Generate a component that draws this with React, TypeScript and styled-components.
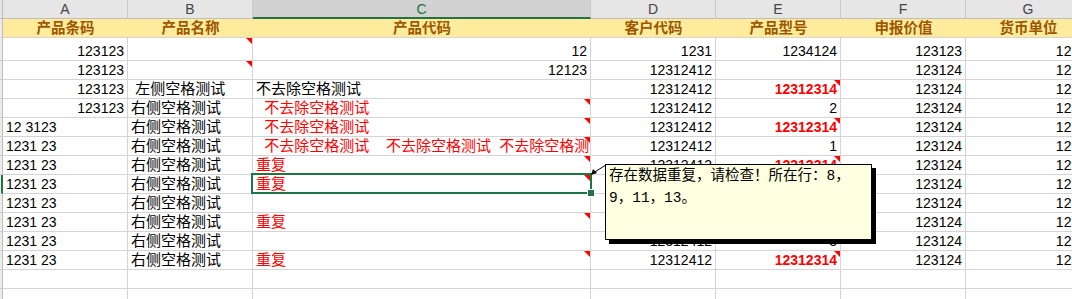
import {FC} from "react";
import styled, {createGlobalStyle} from "styled-components";

const GlobalStyle = createGlobalStyle`
  body {
    margin: 0;
    background: #fff;
    overflow: hidden;
  }
`;

type Align = 'left' | 'right' | 'center';

type CellData = {
  v?: string;
  align?: Align;
  num?: boolean;
  red?: boolean;
  bold?: boolean;
  note?: boolean;
};

const GRID = '3px 125px 125px 338px 125px 125px 125px 125px';
const GREEN = '#217346';

const Sheet = styled.div`
  position: relative;
  width: 1072px;
  height: 299px;
  overflow: hidden;
  font-family: "Liberation Sans", "Noto Sans CJK SC", sans-serif;
`;

const Row = styled.div<{ $h: number }>`
  display: grid;
  grid-template-columns: ${GRID};
  height: ${({$h}) => $h}px;
`;

const Corner = styled.div`
  background: #e6e6e6;
  border-right: 1px solid #bdbdbd;
  border-bottom: 1px solid #bdbdbd;
  box-sizing: border-box;
`;

const ColHead = styled.div<{ $active?: boolean }>`
  display: flex;
  align-items: center;
  justify-content: center;
  box-sizing: border-box;
  background: ${({$active}) => $active ? '#d2d2d2' : '#e6e6e6'};
  border-right: 1px solid #c8c8c8;
  border-bottom: ${({$active}) => $active ? `2px solid ${GREEN}` : '1px solid #bdbdbd'};
  color: ${({$active}) => $active ? GREEN : '#444'};
  font-size: 14px;
  padding-top: ${({$active}) => $active ? '1px' : '0'};
`;

const RowHead = styled.div<{ $active?: boolean }>`
  background: #ececec;
  box-sizing: border-box;
  border-right: ${({$active}) => $active ? `2px solid ${GREEN}` : '1px solid #bdbdbd'};
  border-bottom: 1px solid #d0d0d0;
`;

const TitleCell = styled.div`
  display: flex;
  align-items: flex-end;
  justify-content: center;
  box-sizing: border-box;
  background: #ffeb9c;
  border-bottom: 1px solid #d4d4d4;
  color: #9c5700;
  font-weight: 700;
  font-size: 14.5px;
  line-height: 18px;
`;

const Cell = styled.div<{ $align: Align; $num?: boolean; $red?: boolean; $bold?: boolean }>`
  position: relative;
  display: flex;
  align-items: flex-end;
  justify-content: ${({$align}) => $align === 'right' ? 'flex-end' : $align === 'center' ? 'center' : 'flex-start'};
  box-sizing: border-box;
  padding: 0 3px;
  border-right: 1px solid #d4d4d4;
  border-bottom: 1px solid #d4d4d4;
  white-space: pre;
  overflow: hidden;
  color: ${({$red}) => $red ? '#ff0000' : '#000'};
  font-weight: ${({$bold}) => $bold ? 700 : 400};
  font-size: ${({$num}) => $num ? '14px' : '15px'};
  line-height: 18px;
`;

const NoteMark = styled.span`
  position: absolute;
  top: 0;
  right: 0;
  width: 0;
  height: 0;
  border-top: 6px solid #ff0000;
  border-left: 6px solid transparent;
`;

const Selection = styled.div`
  position: absolute;
  left: 251px;
  top: 173px;
  width: 341px;
  height: 21px;
  box-sizing: border-box;
  border: 2px solid ${GREEN};
  pointer-events: none;
`;

const FillHandle = styled.div`
  position: absolute;
  right: -5px;
  bottom: -5px;
  width: 6px;
  height: 6px;
  background: ${GREEN};
  border: 1px solid #fff;
`;

// the note popup sits over the grid, like Excel shows it
const Comment = styled.div`
  position: absolute;
  left: 605px;
  top: 164px;
  width: 267px;
  height: 76px;
  box-sizing: border-box;
  padding: 0 3px;
  background: #ffffe1;
  border: 1px solid #000;
  box-shadow: 4px 4px 0 0 #000;
  font-family: "Liberation Mono", "Noto Sans CJK SC", monospace;
  font-size: 14.5px;
  line-height: 22px;
  color: #000;
`;

const Connector = styled.svg`
  position: absolute;
  left: 588px;
  top: 160px;
  overflow: visible;
`;

const letters = ['A', 'B', 'C', 'D', 'E', 'F', 'G'];
const titles = ['产品条码', '产品名称', '产品代码', '客户代码', '产品型号', '申报价值', '货币单位'];

const n = (v: string, extra: Partial<CellData> = {}): CellData => ({v, align: 'right', num: true, ...extra});
const t = (v: string, extra: Partial<CellData> = {}): CellData => ({v, align: 'left', ...extra});
const dup = t('重复', {red: true, note: true});
const keep = t('  不去除空格测试', {red: true, note: true});
const redNum = n('12312314', {red: true, bold: true, note: true});
const right = t('右侧空格测试 ');
const gap = t('1231 23', {num: true});

// rows 8-10 of D/E are hidden under the note popup
const rows: CellData[][] = [
  [n('123123'), {note: true}, n('12'), n('1231'), n('1234124'), n('123123'), n('1231')],
  [n('123123'), {note: true}, n('12123'), n('12312412'), {}, n('123124'), n('1231')],
  [n('123123'), t(' 左侧空格测试'), t('不去除空格测试'), n('12312412'), redNum, n('123124'), n('1231')],
  [n('123123'), right, keep, n('12312412'), n('2'), n('123124'), n('1231')],
  [t('12 3123', {num: true}), right, keep, n('12312412'), redNum, n('123124'), n('1231')],
  [gap, right, t('  不去除空格测试    不去除空格测试  不去除空格测试', {red: true, note: true}), n('12312412'), n('1'), n('123124'), n('1231')],
  [gap, right, dup, n('12312412'), redNum, n('123124'), n('1231')],
  [gap, right, dup, {}, {}, n('123124'), n('1231')],
  [gap, right, {}, {}, {}, n('123124'), n('1231')],
  [gap, right, dup, {}, {}, n('123124'), n('1231')],
  [gap, right, {}, n('12312412'), n('3'), n('123124'), n('1231')],
  [gap, right, dup, n('12312412'), redNum, n('123124'), n('1231')],
  [{}, {}, {}, {}, {}, {}, {}],
  [{}, {}, {}, {}, {}, {}, {}],
];

const ACTIVE_ROW = 7;

const App: FC = () => {
  return (
    <Sheet>
      <GlobalStyle/>
      <Row $h={19}>
        <Corner/>
        {letters.map((l) => <ColHead key={l} $active={l === 'C'}>{l}</ColHead>)}
      </Row>
      <Row $h={19}>
        <RowHead/>
        {titles.map((title) => <TitleCell key={title}>{title}</TitleCell>)}
      </Row>
      {rows.map((cells, r) => (
        <Row key={r} $h={r === 0 ? 23 : 19}>
          <RowHead $active={r === ACTIVE_ROW}/>
          {cells.map((c, i) => (
            <Cell key={i} $align={c.align || 'left'} $num={c.num} $red={c.red} $bold={c.bold}>
              {c.v}
              {c.note && <NoteMark/>}
            </Cell>
          ))}
        </Row>
      ))}
      <Selection>
        <FillHandle/>
      </Selection>
      <Connector width="20" height="16" viewBox="0 0 20 16">
        <line x1="5" y1="13" x2="18" y2="5" stroke="#000" strokeWidth="1"/>
        <polygon points="3,15 5,9 9,13" fill="#000"/>
      </Connector>
      <Comment>
        存在数据重复，请检查！所在行：8，<br/>9，11，13。
      </Comment>
    </Sheet>
  );
};

export default App;
